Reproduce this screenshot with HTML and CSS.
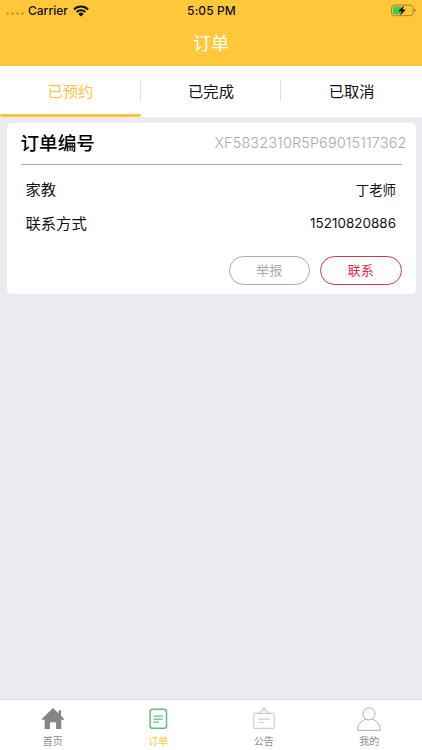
FILE: index.html
```html
<!DOCTYPE html>
<html lang="zh-CN">
<head>
<meta charset="utf-8">
<title>订单</title>
<link rel="stylesheet" href="styles.css">
</head>
<body>
<div class="app">
  <header class="header">
    <div class="status">
      <div class="carrier">
        <span class="signal"><i></i><i></i><i></i><i></i></span>
        <span class="carrier-name">Carrier</span>
        <svg class="wifi" width="16" height="12" viewBox="0 0 16 12"><g fill="none" stroke="#111" stroke-width="2.1"><path d="M1 4.4a10 10 0 0 1 14 0"/><path d="M3.6 7.1a6.3 6.3 0 0 1 8.8 0"/></g><path d="M8 11.6 5.3 8.9a3.8 3.8 0 0 1 5.4 0z" fill="#111"/></svg>
      </div>
      <time class="time">5:05 PM</time>
      <svg class="battery" width="26" height="13" viewBox="0 0 26 13"><rect x=".6" y="1.1" width="21.4" height="10.6" rx="2.8" fill="none" stroke="#a78628"/><path d="M23.4 4.6v3.6q1.4-.6 1.4-1.8t-1.4-1.8z" fill="#a78628"/><rect x="2" y="2.5" width="8.5" height="7.8" rx="1.2" fill="#43c65b"/><path d="M13.3 1.2 7.2 7.2h3.5l-1.6 4.6L15 5.5h-3.4z" fill="#111"/></svg>
    </div>
    <h1 class="title">订单</h1>
  </header>
  <nav class="tabs">
    <a class="tab active">已预约</a>
    <a class="tab">已完成</a>
    <a class="tab">已取消</a>
  </nav>
  <main class="content">
    <section class="card">
      <div class="card-head">
        <h2 class="card-title">订单编号</h2>
        <span class="order-no">XF5832310R5P69015117362</span>
      </div>
      <div class="row"><span class="label">家教</span><span class="value">丁老师</span></div>
      <div class="row"><span class="label">联系方式</span><span class="value phone">15210820886</span></div>
      <div class="actions">
        <button class="btn">举报</button>
        <button class="btn primary">联系</button>
      </div>
    </section>
  </main>
  <footer class="tabbar">
    <a class="item">
      <svg width="24" height="24" viewBox="0 0 24 24"><path d="M12 1 1 11.8v1h2.7V22h5.2v-5.5q0-1.2 1.2-1.2h3.8q1.2 0 1.2 1.2V22h5.2v-9.2H23v-1l-3-3V3.2h-2.4v3.3z" fill="#858585"/></svg>
      <span>首页</span>
    </a>
    <a class="item selected">
      <svg width="24" height="24" viewBox="0 0 24 24" fill="none" stroke="#5dbd7c"><rect x="4.1" y="2.3" width="16.4" height="19" rx="2.4" stroke-width="1.5"/><path d="M7.6 9.2h9.2M7.6 12.2h9.2M7.6 15.2h5.4" stroke-width="1.3"/></svg>
      <span>订单</span>
    </a>
    <a class="item">
      <svg width="24" height="24" viewBox="0 0 24 24" fill="none" stroke="#cdcdcd" stroke-width="1.1"><rect x="1.8" y="6.4" width="20.4" height="15" rx="1.2"/><path d="m7 6.2 3.8-3.5m2.4 0L17 6.2M6 12.1h12M6 15.5h6"/><circle cx="12" cy="2.1" r="1.3"/></svg>
      <span>公告</span>
    </a>
    <a class="item">
      <svg width="24" height="24" viewBox="0 0 24 24" fill="none" stroke="#b0b0b0" stroke-width="1"><circle cx="12" cy="6.9" r="6"/><path d="M9.1 12.3C4.3 13.4.6 17.5.6 23.3h22.8c0-5.8-3.7-9.9-8.5-11"/></svg>
      <span>我的</span>
    </a>
  </footer>
</div>
</body>
</html>
```
FILE: styles.css
```css
* { box-sizing: border-box; }
body {
  margin: 0;
  font-family: Inter, "Noto Sans CJK SC", sans-serif;
  color: #111;
}
.app {
  width: 422px;
  height: 750px;
  display: flex;
  flex-direction: column;
  background: #ebeaf0;
  overflow: hidden;
}
.header {
  height: 66px;
  background: #ffc83b;
  flex: none;
}
.status {
  height: 21px;
  padding: 0 5px 0 6px;
  display: grid;
  grid-template-columns: 1fr auto 1fr;
  align-items: center;
  font-size: 12px;
  line-height: 21px;
  font-weight: 500;
}
.carrier { display: flex; align-items: center; }
.signal { display: flex; gap: 2px; margin: 6px 4px 0 0; }
.signal i { width: 3px; height: 3px; border-radius: 50%; background: #c89f35; }
.wifi { margin-left: 5px; }
.time { letter-spacing: .1px; }
.battery { justify-self: end; }
.title {
  margin: 0;
  height: 45px;
  line-height: 46px;
  text-align: center;
  font-size: 18px;
  font-weight: 400;
  color: #fff;
}
.tabs {
  height: 50.5px;
  flex: none;
  display: grid;
  grid-template-columns: repeat(3, 1fr);
  background: #fff;
}
.tab {
  display: flex;
  justify-content: center;
  height: 50.5px;
  line-height: 51px;
  font-size: 15.3px;
  border-bottom: 3px solid transparent;
  background: linear-gradient(#dedede, #dedede) right 14.5px / 1px 20px no-repeat;
}
.tab:last-child { background: none; }
.tab.active { color: #fbc644; border-bottom-color: #fbc644; border-radius: 0 0 2px 2px; }
.content { flex: 1; padding: 6px 6.5px; }
.card {
  height: 171px;
  padding: 0 14px;
  background: #fff;
  border-radius: 5px;
}
.card-head {
  height: 42px;
  display: flex;
  justify-content: space-between;
  border-bottom: 1px solid #aaa;
  line-height: 40px;
}
.card-title { margin: 0; font-size: 18.6px; font-weight: 500; color: #000; }
.order-no {
  margin-right: -5px;
  color: #aaa;
  font-size: 14.5px;
  font-weight: 300;
  letter-spacing: .09px;
}
.row {
  height: 34px;
  margin: 0 5px;
  display: flex;
  justify-content: space-between;
  align-items: center;
  font-size: 15.3px;
}
.card-head + .row { margin-top: 7px; }
.label { padding-bottom: 2px; }
.value { font-size: 13.4px; padding-right: .5px; }
.phone { letter-spacing: .05px; }
.actions {
  margin-top: 16px;
  display: flex;
  justify-content: flex-end;
  gap: 10px;
}
.btn {
  width: 81.5px;
  height: 29px;
  padding: 0;
  border: 1.3px solid #aaa;
  border-radius: 15px;
  background: #fff;
  color: #aaa;
  font: 400 13px/26px Inter, "Noto Sans CJK SC", sans-serif;
}
.primary { border-color: #df304c; color: #df304c; }
.tabbar {
  height: 51px;
  flex: none;
  display: grid;
  grid-template-columns: repeat(4, 1fr);
  background: #fff;
  border-top: 1px solid #d9d9dc;
}
.item {
  display: flex;
  flex-direction: column;
  align-items: center;
  padding-top: 7px;
  font-size: 10px;
  line-height: 18px;
  color: #8d8d8d;
}
.item svg { flex: none; }
.item span { margin-top: 1px; }
.selected { color: #fbc644; }
```
